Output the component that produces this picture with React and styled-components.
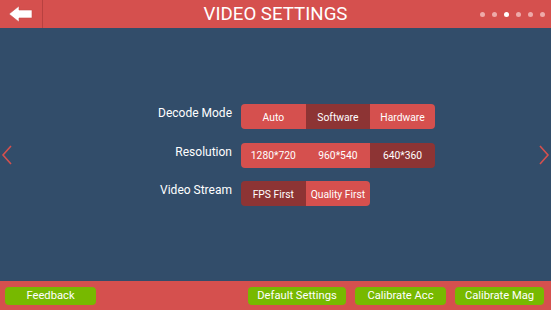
import React from 'react'
import styled, { createGlobalStyle } from 'styled-components'

const GlobalStyle = createGlobalStyle`
    html, body {
        margin: 0;
        padding: 0;
        background: #324d6a;
    }
    body {
        font-family: Roboto, "Liberation Sans", sans-serif;
    }
`

const Screen = styled.div`
    width: 551px;
    height: 310px;
    display: flex;
    flex-direction: column;
    background: #324d6a;
    overflow: hidden;
`

const Header = styled.header`
    height: 28px;
    flex: none;
    background: #d5504e;
    display: grid;
    grid-template-columns: 120px 1fr 120px;
    align-items: center;
`

const HeaderLeft = styled.div`
    display: flex;
    align-items: center;
    height: 100%;
`

const BackButton = styled.div`
    width: 43px;
    height: 100%;
    display: flex;
    align-items: center;
    justify-content: center;
    border-right: 1.5px solid #b84140;
    box-sizing: border-box;
`

const Title = styled.h1`
    margin: 0;
    text-align: center;
    color: #fff;
    font-size: 18.7px;
    font-weight: 400;
    line-height: 28px;
`

const Dots = styled.div`
    display: flex;
    justify-content: flex-end;
    gap: 7px;
    padding-right: 6px;
`

const Dot = styled.span`
    width: 5px;
    height: 5px;
    border-radius: 50%;
    background: ${p => (p.$active ? '#ffffff' : '#eeaaa9')};
`

const Main = styled.main`
    flex: 1;
    position: relative;
    padding-top: 76px;
`

const Form = styled.div`
    display: grid;
    grid-template-columns: 232px auto;
    column-gap: 9px;
    row-gap: 13.5px;
    align-items: start;
`

const Label = styled.div`
    text-align: right;
    color: #fff;
    font-size: 12px;
    line-height: 17px;
    padding-top: 1px;
`

const Segments = styled.div`
    display: flex;
    height: 25px;
    border-radius: 4px;
    overflow: hidden;
    width: max-content;
`

const Segment = styled.div`
    width: 64.6px;
    display: flex;
    align-items: center;
    justify-content: center;
    padding-top: 1px;
    box-sizing: border-box;
    color: #fff;
    font-size: 10.3px;
    background: ${p => (p.$active ? '#8d3434' : '#d5504e')};
`

const Chevron = styled.svg`
    position: absolute;
    top: 50%;
    margin-top: -11px;
    ${p => (p.$right ? 'right: 1px;' : 'left: 1px;')}
`

const Footer = styled.footer`
    height: 29px;
    flex: none;
    background: #d5504e;
    display: flex;
    align-items: center;
    padding: 0 7px 0 5px;
    gap: 9px;
`

const GreenButton = styled.div`
    width: ${p => p.$w}px;
    height: 18px;
    border-radius: 4px;
    background: #77b900;
    color: #fff;
    font-size: 11.2px;
    display: flex;
    align-items: center;
    justify-content: center;
`

const Spacer = styled.div`
    flex: 1;
`

const Row = ({ label, options, active }) => (
    <>
        <Label>{label}</Label>
        <Segments>
            {options.map((o, i) => (
                <Segment key={o} $active={i === active}>{o}</Segment>
            ))}
        </Segments>
    </>
)

const App = () => {
    return (
        <Screen>
            <GlobalStyle />
            <Header>
                <HeaderLeft>
                    <BackButton>
                        <svg width="26" height="18" viewBox="0 0 26 18">
                            <path d="M1 9 L11 1 L11 5 L24 5 L24 13 L11 13 L11 17 Z" fill="#fff" stroke="#c84a48" strokeWidth="0.6" />
                        </svg>
                    </BackButton>
                </HeaderLeft>
                <Title>VIDEO SETTINGS</Title>
                <Dots>
                    {[0, 1, 2, 3, 4, 5].map(i => (
                        <Dot key={i} $active={i === 2} />
                    ))}
                </Dots>
            </Header>
            <Main>
                <Chevron width="12" height="22" viewBox="0 0 12 22">
                    <path d="M10 2 L2 11 L10 20" fill="none" stroke="#d5504e" strokeWidth="1.6" />
                </Chevron>
                <Form>
                    <Row label="Decode Mode" options={['Auto', 'Software', 'Hardware']} active={1} />
                    <Row label="Resolution" options={['1280*720', '960*540', '640*360']} active={2} />
                    <Row label="Video Stream" options={['FPS First', 'Quality First']} active={0} />
                </Form>
                <Chevron $right width="12" height="22" viewBox="0 0 12 22">
                    <path d="M2 2 L10 11 L2 20" fill="none" stroke="#d5504e" strokeWidth="1.6" />
                </Chevron>
            </Main>
            <Footer>
                <GreenButton $w={91}>Feedback</GreenButton>
                <Spacer />
                <GreenButton $w={98}>Default Settings</GreenButton>
                <GreenButton $w={91}>Calibrate Acc</GreenButton>
                <GreenButton $w={89}>Calibrate Mag</GreenButton>
            </Footer>
        </Screen>
    )
}

export default App
